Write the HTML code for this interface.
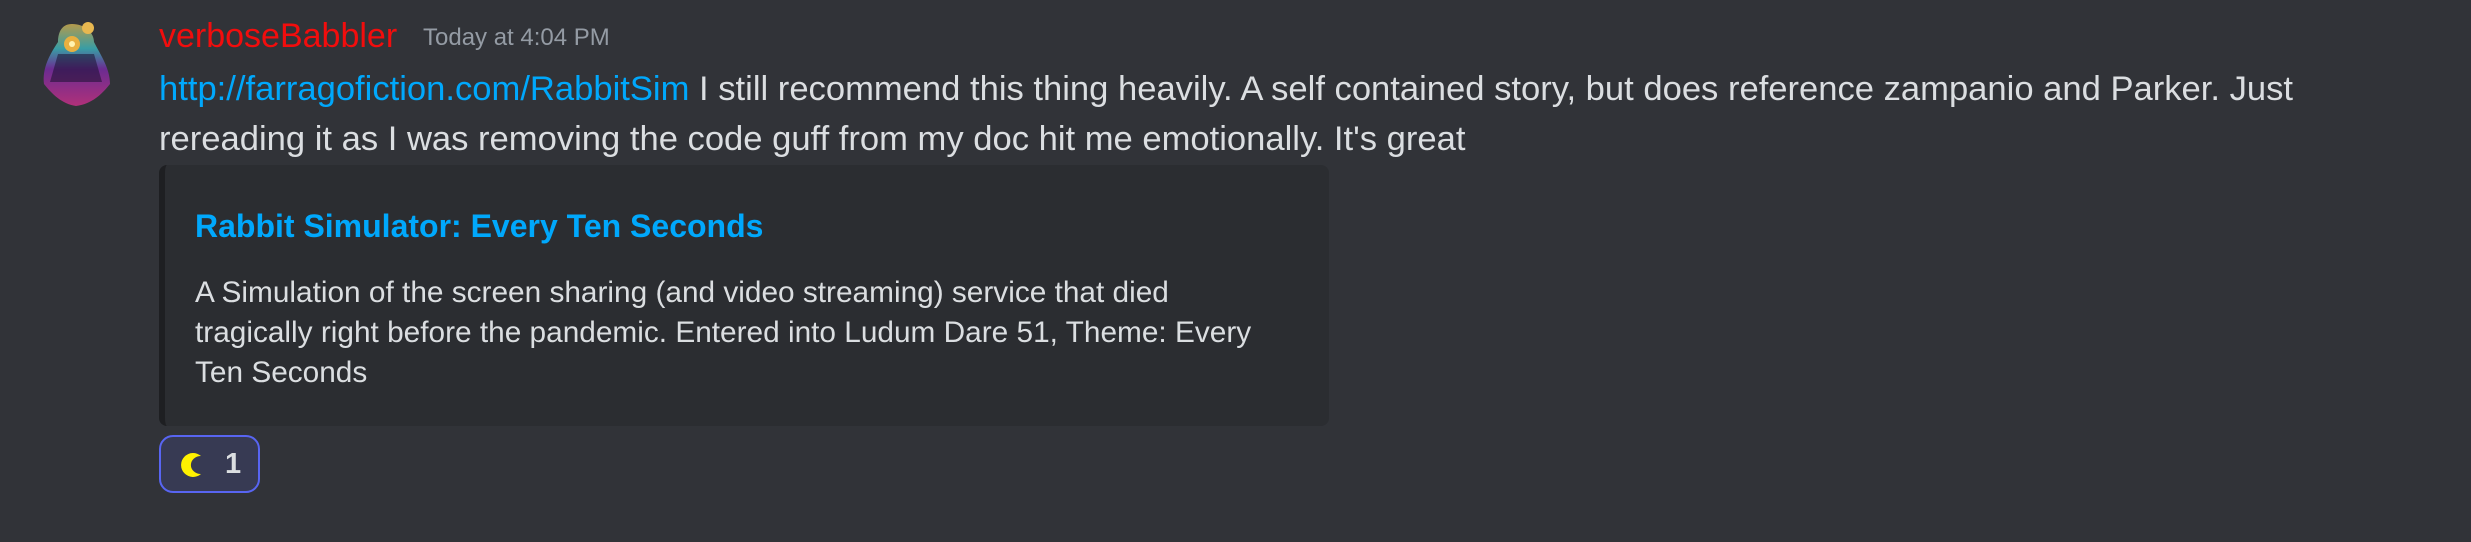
<!DOCTYPE html>
<html><head><meta charset="utf-8"><style>
html,body{margin:0;padding:0;width:2471px;height:542px;background:#313338;overflow:hidden;font-family:"Liberation Sans",sans-serif;}
.abs{position:absolute;white-space:nowrap;}
.name{left:159px;top:16px;font-size:34px;color:#f20d0d;line-height:40px;}
.time{left:423px;top:23px;font-size:24px;color:#949ba4;line-height:30px;}
.msg{left:159px;top:64px;font-size:34.6px;line-height:50px;color:#dbdee1;}
.msg a{color:#00a8fc;text-decoration:none;}
.embed{left:159px;top:165px;width:1170px;height:261px;background:#2b2d31;border-left:6px solid #1e1f22;border-radius:8px;box-sizing:border-box;}
.title{left:30px;top:41px;font-size:32px;font-weight:bold;color:#00a8fc;line-height:40px;}
.desc{left:30px;top:108px;font-size:29.8px;line-height:40px;color:#dbdee1;}
.react{left:159px;top:435px;width:101px;height:58px;box-sizing:border-box;border:2px solid #5865f2;background:#373a53;border-radius:14px;}
</style></head><body>
<div class="abs" style="left:36px;top:18px;width:80px;height:90px;">
<svg width="80" height="90" viewBox="0 0 80 90">
<defs><linearGradient id="g" x1="0" y1="0" x2="0" y2="1"><stop offset="0" stop-color="#d6b450"/><stop offset=".3" stop-color="#3ab8c0"/><stop offset=".55" stop-color="#7a2aa8"/><stop offset="1" stop-color="#d0308a"/></linearGradient></defs>
<path d="M36 6 C26 6 22 14 22 24 C14 36 6 50 8 66 C16 76 26 86 40 88 C56 86 66 76 74 66 C74 50 64 36 58 24 C58 14 48 6 36 6Z" fill="url(#g)" opacity=".8"/>
<path d="M22 36 L58 36 L66 64 L14 64Z" fill="#1a1030" opacity=".55"/>
<circle cx="36" cy="26" r="8" fill="#e8b040"/><circle cx="36" cy="26" r="3" fill="#fff3b0"/>
<circle cx="52" cy="10" r="6" fill="#e8b850"/>
</svg></div>
<div class="abs name">verboseBabbler</div>
<div class="abs time">Today at 4:04 PM</div>
<div class="abs msg"><a>http://farragofiction.com/RabbitSim</a> I still recommend this thing heavily. A self contained story, but does reference zampanio and Parker. Just<br>rereading it as I was removing the code guff from my doc hit me emotionally. It's great</div>
<div class="abs embed">
<div class="abs title">Rabbit Simulator: Every Ten Seconds</div>
<div class="abs desc">A Simulation of the screen sharing (and video streaming) service that died<br>tragically right before the pandemic. Entered into Ludum Dare 51, Theme: Every<br>Ten Seconds</div>
</div>
<div class="abs react">
<svg class="abs" style="left:20px;top:15px" width="26" height="26" viewBox="0 0 26 26"><path d="M20 4 A12 12 0 1 0 20 22 A9 8 0 0 1 20 4Z" fill="#fff200"/></svg>
<div class="abs" style="left:64px;top:11px;font-size:29px;font-weight:bold;color:#dbdee1;line-height:32px;">1</div>
</div>
</body></html>
